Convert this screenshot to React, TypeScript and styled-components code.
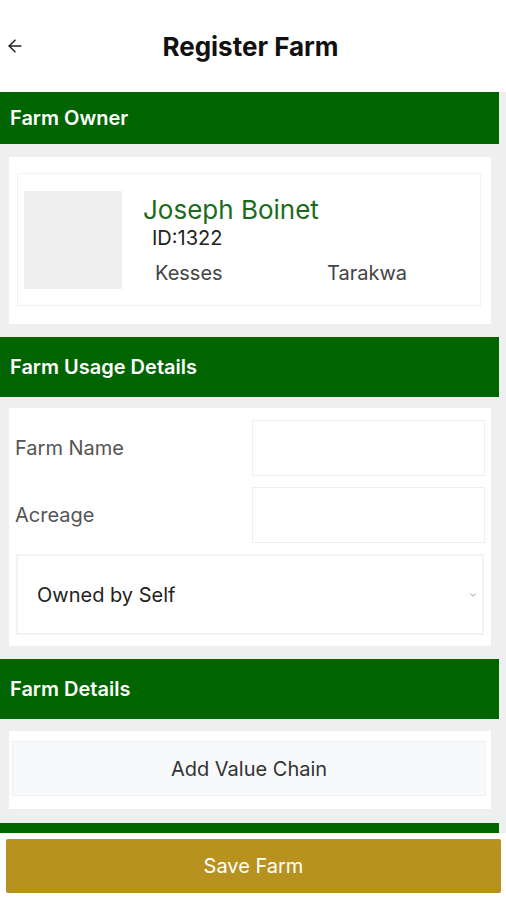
import React from "react";
import styled, { createGlobalStyle } from "styled-components";
import { ArrowLeft, ChevronDown } from "lucide-react";

const GlobalStyle = createGlobalStyle`
  html, body {
    margin: 0;
    padding: 0;
    height: 100%;
  }
  body {
    font-family: Inter, "Noto Sans", sans-serif;
    background: #ffffff;
  }
  #root {
    height: 100%;
  }
`;

const Screen = styled.div`
  height: 100vh;
  display: flex;
  flex-direction: column;
  overflow: hidden;
`;

const TopBar = styled.header`
  height: 92px;
  flex: 0 0 92px;
  display: flex;
  align-items: center;
  background: #ffffff;
`;

const BackButton = styled.button`
  border: 0;
  background: none;
  padding: 0 0 0 5px;
  display: flex;
  align-items: center;
  color: #222;
  cursor: pointer;
`;

const Title = styled.h1`
  flex: 1;
  margin: 0;
  padding-right: 30px;
  text-align: center;
  font-size: 26px;
  font-weight: 700;
  color: #111;
`;

const Body = styled.main`
  flex: 1;
  overflow: hidden;
  background: #efefef;
`;

const Column = styled.div`
  width: 499px;
  display: flex;
  flex-direction: column;
`;

const SectionBar = styled.div<{ $h: number; $gap: number }>`
  height: ${(p) => p.$h}px;
  flex: 0 0 ${(p) => p.$h}px;
  margin-bottom: ${(p) => p.$gap}px;
  background: #006400;
  color: #fff;
  display: flex;
  align-items: center;
  padding-left: 10px;
  font-size: 20px;
  font-weight: 600;
`;

const Card = styled.div<{ $pad: string; $gap: number }>`
  margin: 0 8px ${(p) => p.$gap}px 9px;
  background: #fff;
  padding: ${(p) => p.$pad};
  display: flex;
  flex-direction: column;
`;

const OwnerBox = styled.div`
  border: 1px solid #f1f1f1;
  height: 133px;
  box-sizing: border-box;
  display: flex;
  align-items: center;
  padding-left: 6px;
  gap: 21px;
`;

const Avatar = styled.div`
  width: 98px;
  height: 98px;
  background: #efefef;
`;

const OwnerInfo = styled.div`
  display: flex;
  flex-direction: column;
  margin-top: 0;
`;

const OwnerName = styled.div`
  font-size: 26px;
  color: #1c6b1c;
  line-height: 32px;
`;

const OwnerId = styled.div`
  font-size: 20px;
  color: #222;
  padding-left: 9px;
  line-height: 24px;
`;

const Places = styled.div`
  display: grid;
  grid-template-columns: 172px auto;
  padding-left: 12px;
  margin-top: 11px;
  font-size: 20px;
  color: #444;
  line-height: 24px;
`;

const FieldRow = styled.div`
  display: grid;
  grid-template-columns: 237px 233px;
  align-items: center;
  margin-bottom: 11px;
`;

const FieldLabel = styled.label`
  font-size: 20px;
  color: #555;
`;

const TextInput = styled.input`
  height: 56px;
  box-sizing: border-box;
  border: 1px solid #eceef0;
  outline: none;
  font: inherit;
  padding: 0 10px;
`;

const SelectBox = styled.div`
  margin: 0 1px;
  height: 81px;
  box-sizing: border-box;
  border: 2px solid #f2f3f5;
  display: flex;
  align-items: center;
  justify-content: space-between;
  padding: 0 4px 0 19px;
  font-size: 20px;
  color: #222;
`;

const ValueChainButton = styled.button`
  height: 55px;
  border: 1px solid #eef0f3;
  background: #f8f9fb;
  font-family: inherit;
  font-size: 20px;
  color: #333;
  cursor: pointer;
`;

const Footer = styled.footer`
  flex: 0 0 67px;
  background: #fff;
  padding: 6px 5px 7px 6px;
  box-sizing: border-box;
  display: flex;
`;

const SaveButton = styled.button`
  flex: 1;
  border: 0;
  border-radius: 2px;
  background: #b8921f;
  color: #fff;
  font-family: inherit;
  font-size: 20px;
  cursor: pointer;
`;

export default function App() {
  return (
    <>
      <GlobalStyle />
      <Screen>
        <TopBar>
          <BackButton aria-label="Back">
            <ArrowLeft size={20} strokeWidth={1.8} />
          </BackButton>
          <Title>Register Farm</Title>
        </TopBar>
        <Body>
          <Column>
            <SectionBar $h={52} $gap={13}>Farm Owner</SectionBar>
            <Card $pad="16px 10px 18px 8px" $gap={13}>
              <OwnerBox>
                <Avatar />
                <OwnerInfo>
                  <OwnerName>Joseph Boinet</OwnerName>
                  <OwnerId>ID:1322</OwnerId>
                  <Places>
                    <span>Kesses</span>
                    <span>Tarakwa</span>
                  </Places>
                </OwnerInfo>
              </OwnerBox>
            </Card>

            <SectionBar $h={60} $gap={11}>Farm Usage Details</SectionBar>
            <Card $pad="12px 6px 11px 6px" $gap={13}>
              <FieldRow>
                <FieldLabel>Farm Name</FieldLabel>
                <TextInput />
              </FieldRow>
              <FieldRow>
                <FieldLabel>Acreage</FieldLabel>
                <TextInput />
              </FieldRow>
              <SelectBox>
                <span>Owned by Self</span>
                <ChevronDown size={10} color="#888" />
              </SelectBox>
            </Card>

            <SectionBar $h={60} $gap={12}>Farm Details</SectionBar>
            <Card $pad="10px 5px 13px 3px" $gap={14}>
              <ValueChainButton>Add Value Chain</ValueChainButton>
            </Card>

            <SectionBar $h={60} $gap={0} />
          </Column>
        </Body>
        <Footer>
          <SaveButton>Save Farm</SaveButton>
        </Footer>
      </Screen>
    </>
  );
}
